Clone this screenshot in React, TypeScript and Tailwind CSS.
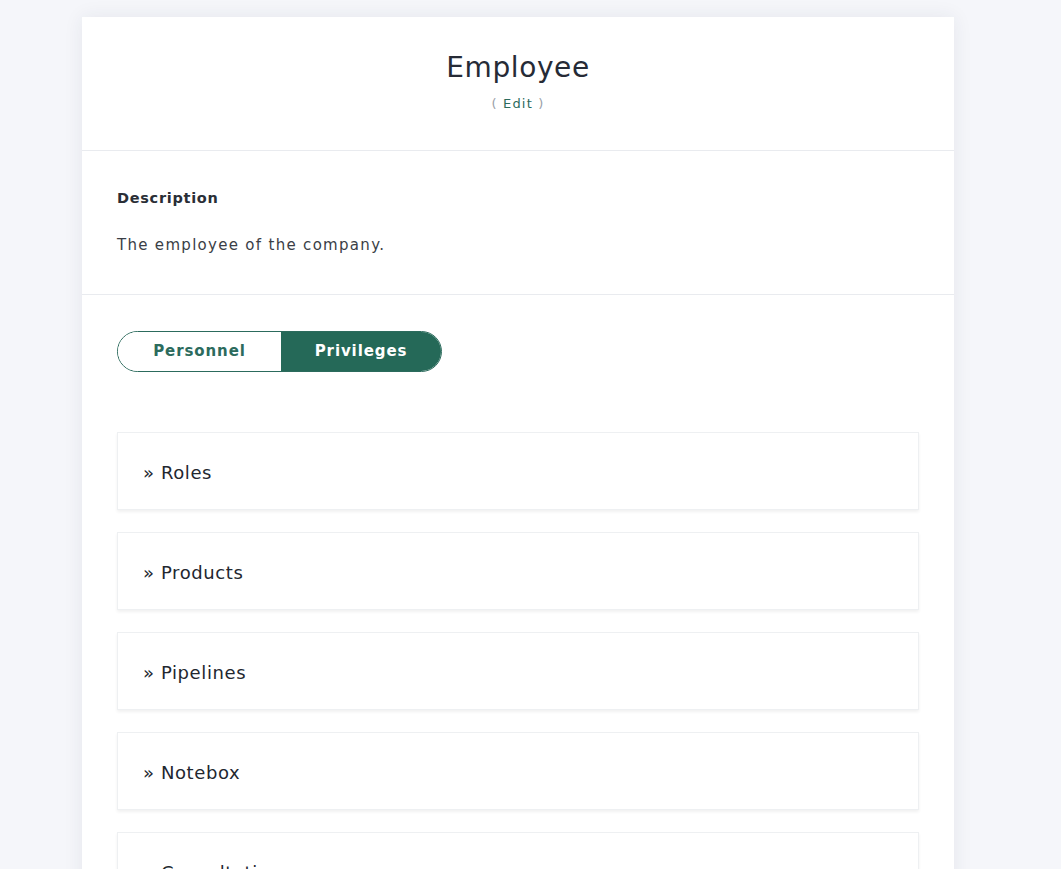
const sections = ["Roles", "Products", "Pipelines", "Notebox", "Consultations", "Reports"];

export default function App() {
  return (
    <div className="min-h-screen bg-[#f5f6fa] pt-[17px] font-['DejaVu_Sans',sans-serif] text-[#2b2f38]">
      <div className="ml-[82px] w-[872px] bg-white shadow-[0_0_18px_rgba(40,50,80,0.08)]">
        <div className="flex flex-col items-center border-b border-[#e9ebef] pt-[33px] pb-[36px]">
          <h1 className="text-[28px] leading-[36px] tracking-[0.6px] text-[#262b36]">Employee</h1>
          <a className="mt-[8px] text-[13px] tracking-[1.2px] text-[#9aa0a8]">
            ( <span className="text-[#2c6b5d]">Edit</span> )
          </a>
        </div>

        <div className="border-b border-[#e9ebef] px-[35px] pt-[37px] pb-[39px]">
          <h3 className="text-[14.5px] font-bold leading-[20px] tracking-[0.7px] text-[#2a2e36]">Description</h3>
          <p className="mt-[27px] text-[15px] leading-[20px] tracking-[1.3px] text-[#3a3e46]">
            The employee of the company.
          </p>
        </div>

        <div className="px-[35px] pt-[36px] pb-[40px]">
          <div className="flex h-[41px] w-[325px] overflow-hidden rounded-full border border-[#2c6b5d]">
            <button className="flex-1 bg-white text-[15px] font-semibold tracking-[0.9px] text-[#2c6b5d]">
              Personnel
            </button>
            <button className="w-[160px] bg-[#256958] text-[15px] font-semibold tracking-[0.9px] text-white">
              Privileges
            </button>
          </div>

          <div className="mt-[60px] flex flex-col gap-[22px]">
            {sections.map((s) => (
              <div
                key={s}
                className="flex h-[78px] items-center border border-[#eef0f2] bg-white px-[25px] pt-[4px] shadow-[0_2px_3px_rgba(0,0,0,0.06)]"
              >
                <span className="text-[18px] tracking-[0.6px] text-[#23272f]">» {s}</span>
              </div>
            ))}
          </div>
        </div>
      </div>
    </div>
  );
}
